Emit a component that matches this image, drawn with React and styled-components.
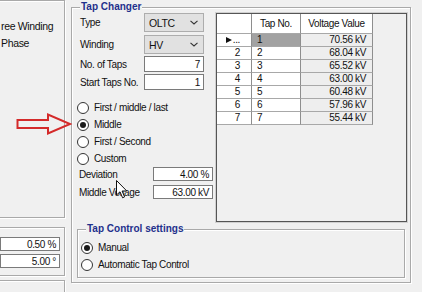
import React from 'react';
import styled, { createGlobalStyle } from 'styled-components';

const GlobalStyle = createGlobalStyle`
  html, body { margin: 0; padding: 0; background: #f0f0f0; }
  body { font-family: "Liberation Sans", Arial, sans-serif; font-size: 10px; color: #111; }
`;

const Page = styled.div`
  position: relative;
  width: 422px;
  height: 292px;
  overflow: hidden;
  display: flex;
  align-items: flex-start;
  background: #f0f0f0;
  letter-spacing: -0.35px;
`;

const etched = `
  box-sizing: border-box;
  border: 1px solid #a9a9a9;
  box-shadow: inset 1px 1px 0 #fff, 1px 1px 0 #fff;
`;

const LeftColumn = styled.div`
  margin-left: -100px;
  width: 165px;
  display: flex;
  flex-direction: column;
  flex-shrink: 0;
`;

const LeftBox = styled.div`
  ${etched}
  margin-top: ${p => p.$mt}px;
  height: ${p => p.$h}px;
  display: flex;
  flex-direction: column;
  padding: ${p => p.$pad || '0'};
  gap: ${p => p.$gap || 0}px;
`;

const TextLine = styled.div`
  height: 17px;
  line-height: 17px;
  padding-left: ${p => p.$indent}px;
  white-space: nowrap;
  font-size: 10.5px;
`;

const TextBox = styled.div`
  box-sizing: border-box;
  height: ${p => p.$h || 14}px;
  width: ${p => p.$w || 60}px;
  align-self: ${p => p.$align || 'auto'};
  border: 1px solid #7a7a7a;
  background: #fff;
  display: flex;
  align-items: center;
  justify-content: flex-end;
  padding-right: 3px;
  white-space: nowrap;
`;

const Group = styled.div`
  ${etched}
  position: relative;
  margin-left: 6px;
  margin-top: 7px;
  width: 340px;
  height: 276px;
  padding: 5px 3px 0 5px;
  display: flex;
  flex-direction: column;
  flex-shrink: 0;
`;

const GroupTitle = styled.span`
  position: absolute;
  top: -7px;
  left: ${p => p.$left}px;
  padding: 0 1px;
  background: #f0f0f0;
  font-weight: bold;
  color: #1f318c;
  line-height: 12px;
  letter-spacing: 0;
  white-space: nowrap;
`;

const TopSection = styled.div`
  display: flex;
  gap: 3px;
  height: 209px;
`;

const Controls = styled.div`
  width: 136px;
  display: flex;
  flex-direction: column;
  flex-shrink: 0;
`;

const FieldRow = styled.div`
  display: grid;
  grid-template-columns: ${p => p.$lw}px 60px;
  align-items: center;
  height: ${p => p.$h}px;
  margin-top: ${p => p.$mt || 0}px;
`;

const Label = styled.span`
  padding-left: ${p => p.$pl ?? 2}px;
  white-space: nowrap;
`;

const Combo = styled.div`
  box-sizing: border-box;
  height: 100%;
  border: 1px solid #adadad;
  background: #e1e1e1;
  display: flex;
  align-items: center;
  justify-content: space-between;
  padding: 0 5px 0 4px;
  font-size: 10.5px;
`;

const RadioList = styled.div`
  display: flex;
  flex-direction: column;
  margin-top: ${p => p.$mt || 0}px;
`;

const RadioRow = styled.div`
  display: flex;
  align-items: center;
  gap: 5px;
  height: 17px;
  white-space: nowrap;
`;

const RadioDot = styled.span`
  box-sizing: border-box;
  width: 12px;
  height: 12px;
  border: 1px solid #333;
  border-radius: 50%;
  background: #fff;
  display: flex;
  align-items: center;
  justify-content: center;
  flex-shrink: 0;
  &::after {
    content: '';
    width: 6px;
    height: 6px;
    border-radius: 50%;
    background: ${p => (p.$checked ? '#1a1a1a' : 'transparent')};
  }
`;

const GridPanel = styled.div`
  box-sizing: border-box;
  width: 191px;
  height: 209px;
  border: 1px solid #555;
  background: #f0f0f0;
  box-shadow: 0 0 0 1px #d0d0d0;
`;

const Grid = styled.div`
  display: grid;
  grid-template-columns: 35px 49px 72px;
  grid-template-rows: 20px repeat(7, 13px);
  width: max-content;
`;

const Cell = styled.div`
  box-sizing: border-box;
  border-right: 1px solid #8e8e8e;
  border-bottom: 1px solid #a8a8a8;
  background: ${p => p.$bg || '#fff'};
  display: flex;
  align-items: center;
  justify-content: ${p => p.$justify || 'flex-start'};
  padding: ${p => p.$pad || '0'};
  white-space: nowrap;
  line-height: 1;
`;

const RowArrow = styled.span`
  width: 0;
  height: 0;
  border-top: 3.5px solid transparent;
  border-bottom: 3.5px solid transparent;
  border-left: 6px solid #111;
  margin-right: 1px;
`;

const SubGroup = styled.div`
  ${etched}
  position: relative;
  margin-top: 7px;
  margin-right: 2px;
  height: 49px;
  padding: 9px 0 0 3px;
`;

const Overlay = styled.svg`
  position: absolute;
  left: ${p => p.$x}px;
  top: ${p => p.$y}px;
  overflow: visible;
`;

const rows = [
  ['1', '70.56 kV'],
  ['2', '68.04 kV'],
  ['3', '65.52 kV'],
  ['4', '63.00 kV'],
  ['5', '60.48 kV'],
  ['6', '57.96 kV'],
  ['7', '55.44 kV'],
];

const Chevron = () => (
  <svg width="8" height="5" viewBox="0 0 8 5">
    <polyline points="0.5,0.8 4,4 7.5,0.8" fill="none" stroke="#333" strokeWidth="1.1" />
  </svg>
);

export default function App() {
  return (
    <>
      <GlobalStyle />
      <Page>
        <LeftColumn>
          <LeftBox $mt={0} $h={218} $pad="17px 0 0 0">
            <TextLine $indent={100}>ree Winding</TextLine>
            <TextLine $indent={100}>Phase</TextLine>
          </LeftBox>
          <LeftBox $mt={9} $h={49} $pad="9px 4px 0 0" $gap={3}>
            <TextBox $align="flex-end">0.50 %</TextBox>
            <TextBox $align="flex-end">5.00 °</TextBox>
          </LeftBox>
          <LeftBox $mt={4} $h={30} />
        </LeftColumn>

        <Group>
          <GroupTitle $left={8}>Tap Changer</GroupTitle>
          <TopSection>
            <Controls>
              <FieldRow $lw={67} $h={19}>
                <Label $pl={3}>Type</Label>
                <Combo>OLTC<Chevron /></Combo>
              </FieldRow>
              <FieldRow $lw={67} $h={19} $mt={3}>
                <Label $pl={3}>Winding</Label>
                <Combo>HV<Chevron /></Combo>
              </FieldRow>
              <FieldRow $lw={67} $h={16} $mt={2}>
                <Label $pl={3}>No. of Taps</Label>
                <TextBox $h={16}>7</TextBox>
              </FieldRow>
              <FieldRow $lw={67} $h={16} $mt={2}>
                <Label $pl={3}>Start Taps No.</Label>
                <TextBox $h={16}>1</TextBox>
              </FieldRow>
              <RadioList $mt={9}>
                <RadioRow><RadioDot />First / middle / last</RadioRow>
                <RadioRow><RadioDot $checked />Middle</RadioRow>
                <RadioRow><RadioDot />First / Second</RadioRow>
                <RadioRow><RadioDot />Custom</RadioRow>
              </RadioList>
              <FieldRow $lw={76} $h={14}>
                <Label>Deviation</Label>
                <TextBox>4.00 %</TextBox>
              </FieldRow>
              <FieldRow $lw={76} $h={14} $mt={4}>
                <Label>Middle Voltage</Label>
                <TextBox>63.00 kV</TextBox>
              </FieldRow>
            </Controls>
            <GridPanel>
              <Grid>
                <Cell />
                <Cell $justify="center">Tap No.</Cell>
                <Cell $justify="center">Voltage Value</Cell>
                {rows.map(([n, v], i) => (
                  <React.Fragment key={n}>
                    <Cell $justify="flex-end" $pad="0 11px 0 0">
                      {i === 0 ? (<><RowArrow />...</>) : n}
                    </Cell>
                    <Cell $pad="0 0 0 5px" $bg={i === 0 ? '#a2a2a2' : '#fff'}>{n}</Cell>
                    <Cell $justify="flex-end" $pad="0 6px 0 0" $bg="#eeeeee">{v}</Cell>
                  </React.Fragment>
                ))}
              </Grid>
            </GridPanel>
          </TopSection>
          <SubGroup>
            <GroupTitle $left={8}>Tap Control settings</GroupTitle>
            <RadioList>
              <RadioRow><RadioDot $checked />Manual</RadioRow>
              <RadioRow><RadioDot />Automatic Tap Control</RadioRow>
            </RadioList>
          </SubGroup>
        </Group>

        <Overlay $x={16} $y={113} width="56" height="22" viewBox="0 0 56 22">
          <polygon
            points="1.5,7 32,7 32,1.5 54,11 32,20.5 32,15 1.5,15"
            fill="none"
            stroke="#d42a2a"
            strokeWidth="2"
            strokeLinejoin="miter"
          />
        </Overlay>
        <Overlay $x={116} $y={180} width="12" height="19" viewBox="0 0 12 19">
          <path
            d="M0.5 0.5 L0.5 15 L4 11.8 L6.6 17.8 L8.6 16.9 L6.1 11 L10.8 11 Z"
            fill="#fff"
            stroke="#111"
            strokeWidth="1"
            strokeLinejoin="round"
          />
        </Overlay>
      </Page>
    </>
  );
}
